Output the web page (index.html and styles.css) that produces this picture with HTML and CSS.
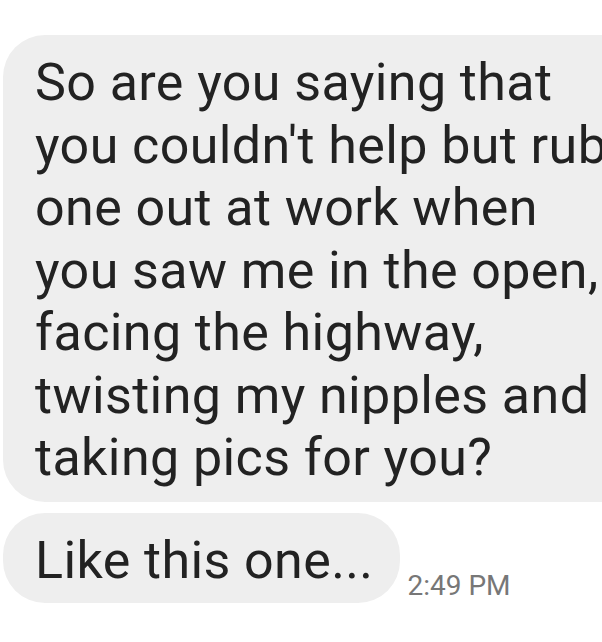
FILE: index.html
```html
<!DOCTYPE html>
<html>
<head>
<meta charset="utf-8">
<link rel="stylesheet" href="styles.css">
</head>
<body>
<div class="thread">
  <div class="bubble bubble-wide">So are you saying that<br>you couldn't help but rub<br>one out at work when<br>you saw me in the open,<br>facing the highway,<br>twisting my nipples and<br>taking pics for you?</div>
  <div class="row">
    <div class="bubble">Like this one...</div>
    <span class="time">2:49 PM</span>
  </div>
</div>
</body>
</html>
```

FILE: styles.css
```css
html, body {
  margin: 0;
  padding: 0;
  background: #ffffff;
  overflow: hidden;
}
.thread {
  width: 602px;
  height: 642px;
  overflow: hidden;
  padding: 35px 0 0 3px;
  box-sizing: border-box;
  display: flex;
  flex-direction: column;
  gap: 11px;
  font-family: Roboto, "Liberation Sans", sans-serif;
}
.bubble {
  background: #eeeeee;
  color: #222222;
  font-size: 52px;
  letter-spacing: 0.4px;
  line-height: 62.5px;
  padding: 17px 27px 11px 32px;
  border-radius: 42px;
  white-space: nowrap;
  box-sizing: border-box;
}
.bubble-wide {
  width: 680px;
  flex: none;
  padding-bottom: 12px;
}
.row {
  display: flex;
  align-items: flex-end;
  gap: 7px;
}
.time {
  font-size: 28px;
  line-height: 28px;
  color: #777777;
  margin-bottom: 3px;
}
```
